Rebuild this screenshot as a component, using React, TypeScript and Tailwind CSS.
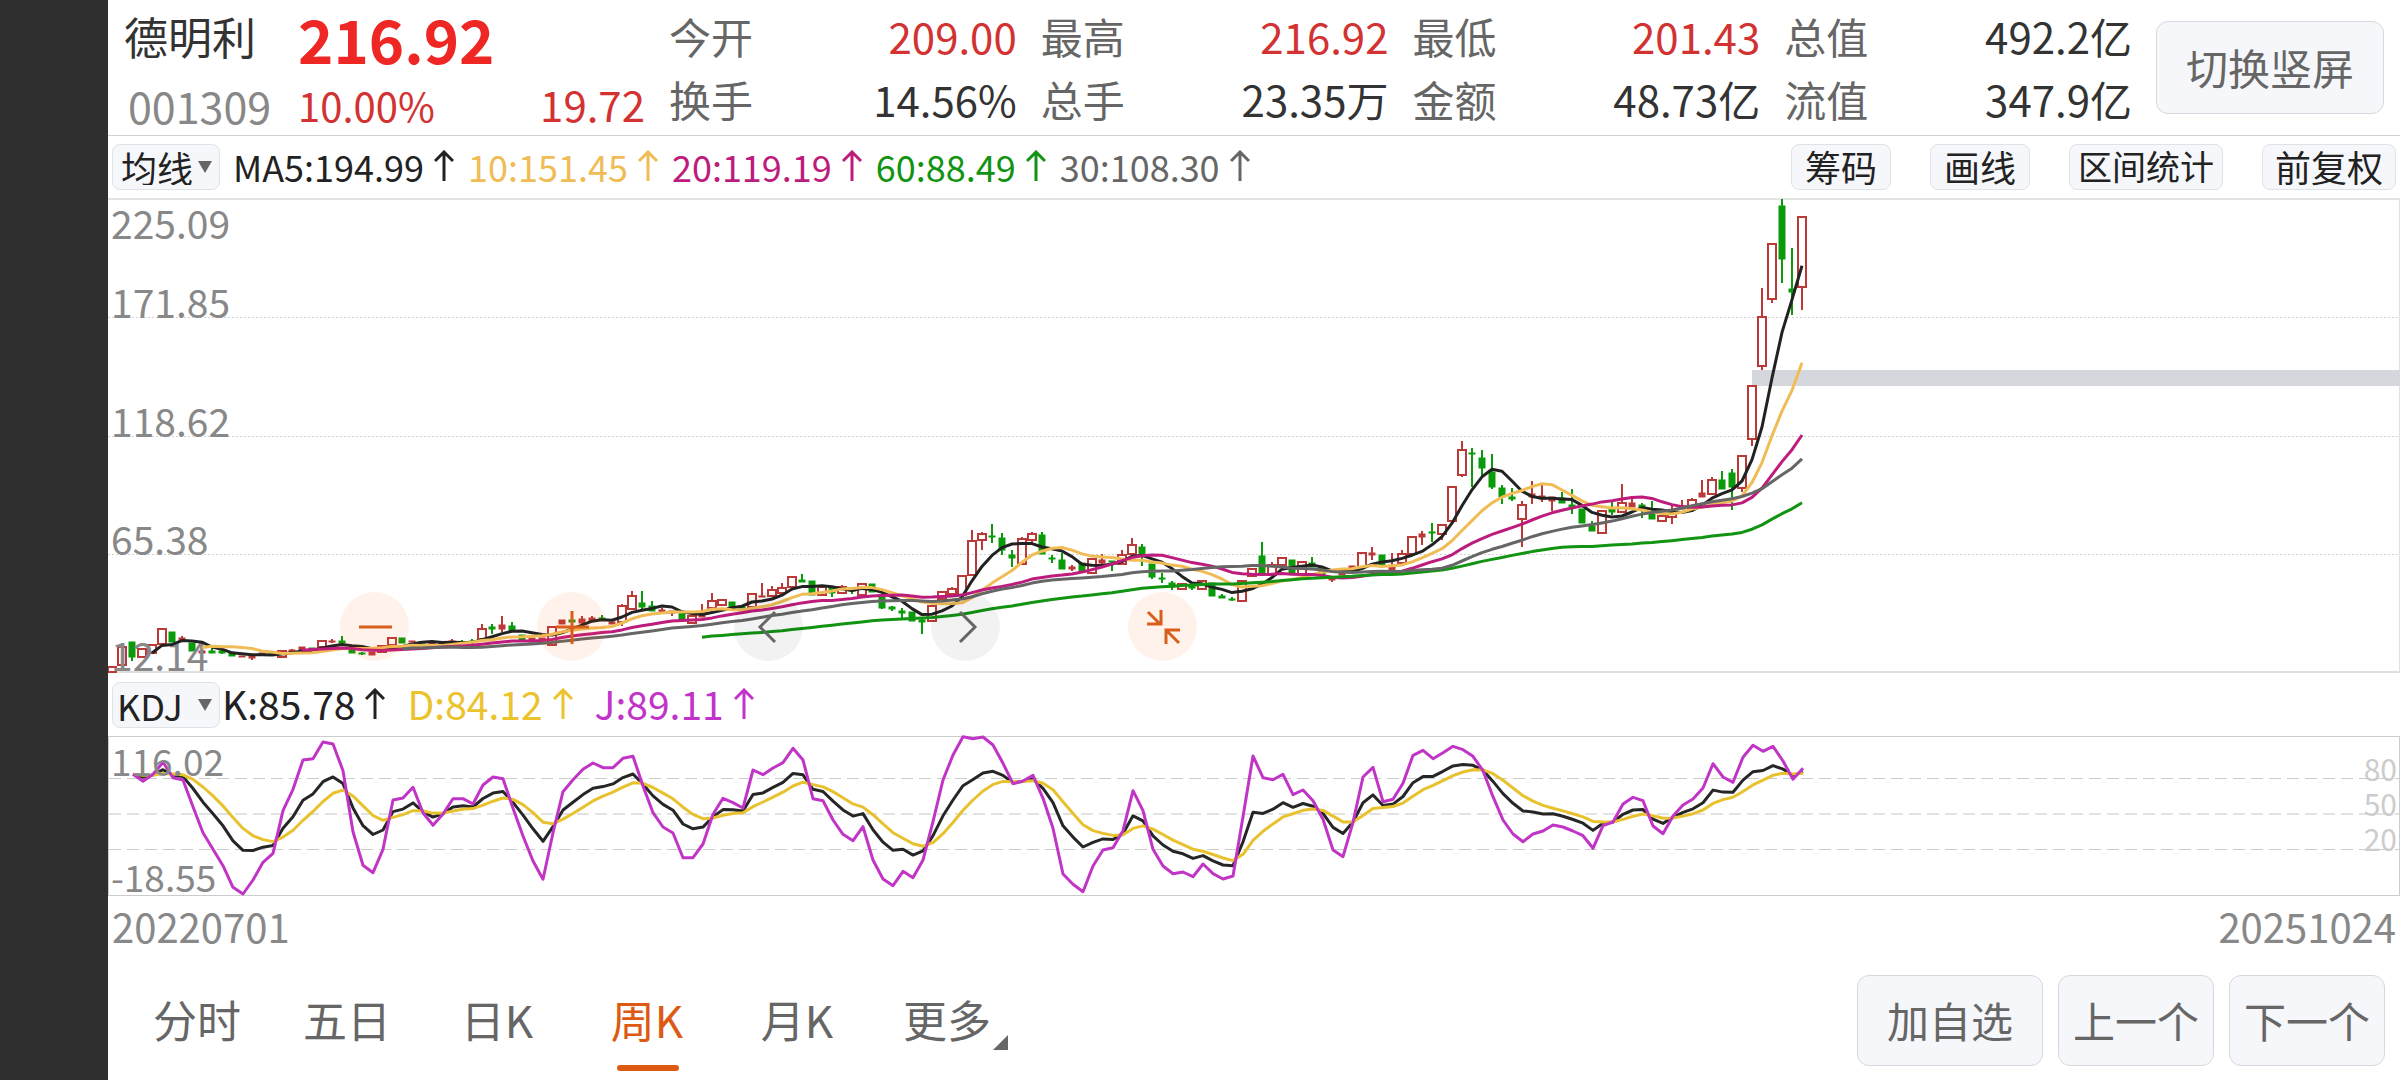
import { useState } from "react";
import type { ReactNode } from "react";
import clsx from "clsx";

type Candle = [dir: "r" | "g", top: number, bottom: number, high?: number, low?: number];

// Weekly candles in plot units: body top, body bottom, then wick ends where there are any
const CANDLES: Candle[] = [
    ["r", 667, 672], ["r", 647, 665], ["g", 642, 657, 642, 661], ["r", 649, 657], ["r", 645, 653],
    ["r", 629, 644], ["g", 632, 642], ["r", 638, 641, 636], ["g", 643, 651], ["r", 651, 653],
    ["g", 651, 653, 648], ["g", 651, 653, 649, 654], ["g", 653, 656], ["r", 656, 657], ["r", 656, 658, 656, 660],
    ["r", 653, 654], ["g", 652, 654], ["r", 651, 657], ["r", 650, 652, 649], ["r", 647, 650],
    ["g", 648, 651], ["r", 641, 647], ["r", 641, 642, 639, 643], ["g", 641, 643, 636], ["g", 650, 653],
    ["g", 653, 654, 652, 655], ["r", 652, 655], ["r", 646, 652], ["r", 638, 645, 637], ["g", 638, 643],
    ["r", 641, 642], ["g", 642, 643], ["r", 643, 644], ["r", 643, 645], ["r", 641, 643, 639],
    ["g", 642, 643, 640], ["g", 641, 642, 639], ["r", 629, 639, 624], ["g", 627, 629, 624, 634], ["r", 625, 629, 616, 632],
    ["g", 626, 631, 622], ["g", 635, 641], ["r", 638, 642], ["r", 638, 641], ["r", 627, 645],
    ["r", 620, 624], ["g", 620, 622], ["r", 619, 623, 616, 625], ["r", 618, 621, 616], ["g", 618, 620, 615],
    ["r", 622, 624], ["r", 606, 622, 604, 626], ["r", 596, 609, 591], ["g", 603, 607, 591, 609], ["g", 606, 611, 601],
    ["r", 610, 613, 608], ["r", 611, 613, 611, 616], ["g", 613, 620], ["r", 616, 623], ["r", 615, 617, 604],
    ["r", 601, 608, 593], ["r", 600, 605], ["g", 602, 607], ["g", 607, 608], ["r", 594, 607],
    ["r", 596, 597, 583], ["r", 590, 596, 586], ["r", 588, 593, 583], ["r", 577, 587], ["g", 580, 582, 574],
    ["g", 581, 595], ["r", 587, 595], ["g", 587, 593, 587, 597], ["r", 587, 593, 585], ["g", 588, 591, 588, 594],
    ["r", 584, 595], ["g", 584, 592], ["g", 595, 608, 595, 609], ["g", 607, 609, 606, 611], ["g", 611, 613, 608, 618],
    ["g", 612, 621], ["g", 620, 622, 619, 634], ["r", 606, 621], ["r", 592, 599], ["r", 589, 594, 587],
    ["r", 576, 595], ["r", 541, 575, 530], ["r", 534, 540, 532, 550], ["g", 536, 537, 524, 543], ["g", 538, 550, 533, 555],
    ["g", 555, 558, 550, 567], ["r", 539, 564, 537], ["r", 534, 540, 532, 543], ["g", 535, 554, 532], ["g", 558, 559, 555, 563],
    ["g", 560, 569, 553], ["r", 567, 569, 565, 571], ["g", 563, 572], ["r", 559, 573], ["r", 560, 563, 554, 565],
    ["g", 561, 562, 561, 571], ["r", 555, 564, 550], ["r", 545, 554, 538], ["g", 547, 555, 544, 566], ["g", 564, 577, 564, 579],
    ["g", 578, 579, 573, 583], ["g", 583, 587, 581, 590], ["r", 584, 589], ["g", 585, 588, 585, 590], ["r", 581, 589],
    ["g", 583, 596], ["g", 596, 598, 594], ["g", 599, 600, 597, 601], ["r", 581, 601], ["r", 569, 576, 569, 577],
    ["g", 556, 573, 542], ["r", 565, 575, 562], ["r", 558, 565, 557], ["g", 560, 573], ["r", 562, 574],
    ["g", 563, 567, 557], ["g", 568, 575], ["r", 577, 580, 577, 582], ["r", 572, 575], ["r", 566, 570],
    ["r", 553, 567], ["r", 553, 555, 547, 560], ["g", 555, 566], ["r", 566, 570, 553], ["r", 554, 563, 550],
    ["r", 537, 554], ["r", 534, 537, 531, 545], ["g", 532, 533, 523, 542], ["r", 525, 534, 525, 540], ["r", 487, 521],
    ["r", 450, 475, 441, 477], ["g", 453, 454, 448, 487], ["g", 458, 468, 450, 477], ["g", 472, 487, 454, 489], ["g", 488, 497, 485, 504],
    ["g", 497, 499, 488, 501], ["r", 505, 519, 501, 547], ["r", 494, 497, 481, 504], ["r", 496, 499, 485, 502], ["r", 497, 501, 497, 511],
    ["g", 498, 503, 492], ["g", 505, 508, 489, 514], ["g", 509, 523], ["g", 526, 531, 521], ["r", 511, 533],
    ["g", 508, 512, 502, 515], ["r", 503, 512, 484], ["r", 503, 507, 499], ["g", 505, 509, 503, 518], ["g", 513, 519, 501],
    ["r", 516, 521], ["r", 512, 517, 505, 524], ["r", 506, 509, 500], ["r", 500, 508, 498], ["r", 493, 497, 480],
    ["r", 480, 494, 477], ["g", 480, 489, 471], ["g", 473, 487, 469, 510], ["r", 456, 488, 456, 492], ["r", 386, 439, 386, 446],
    ["r", 317, 366, 288, 370], ["r", 244, 299, 244, 303], ["g", 206, 259, 199, 283], ["g", 289, 292, 248, 315], ["r", 217, 287, 217, 310],
];

// J line, starting with the third week
const J_START = 2;
const J_LINE = [
    283, 304, 283, 247, 293, 300, 380, 458, 508, 557, 622, 642, 600, 547, 520, 392, 328, 240, 236, 186,
    192, 272, 455, 556, 578, 508, 360, 354, 322, 398, 436, 402, 356, 356, 372, 315, 291, 296, 385, 468,
    543, 598, 458, 335, 299, 268, 249, 263, 263, 235, 229, 318, 398, 441, 459, 533, 533, 492, 403, 355,
    368, 384, 270, 284, 264, 248, 205, 240, 356, 362, 420, 463, 482, 440, 540, 597, 617, 574, 593, 540,
    425, 300, 225, 170, 176, 171, 195, 250, 311, 303, 286, 355, 445, 582, 613, 635, 558, 510, 503, 452,
    332, 392, 508, 558, 581, 576, 590, 552, 581, 597, 588, 410, 228, 293, 299, 283, 344, 330, 362, 418,
    510, 530, 427, 291, 262, 365, 358, 310, 226, 211, 236, 218, 199, 209, 229, 272, 350, 420, 462, 485,
    462, 453, 435, 441, 453, 467, 505, 437, 426, 372, 352, 362, 438, 461, 408, 375, 357, 324, 251, 291,
    307, 232, 196, 214, 199, 243, 298, 265,
];

const PLOT_TOP = 200;
const candleX = (i: number) => 4 + i * 10;
const closeOf = (c: Candle) => (c[0] === "r" ? c[1] : c[2]);

function maPoints(period: number) {
    const points: string[] = [];
    for (let i = period - 1; i < CANDLES.length; i++) {
        let sum = 0;
        for (let k = i - period + 1; k <= i; k++) sum += closeOf(CANDLES[k]);
        points.push(`${candleX(i)},${(sum / period - PLOT_TOP).toFixed(1)}`);
    }
    return points.join(" ");
}

// J = 3K - 2D and D is the smoothed K, so both follow from J
function kdjPoints() {
    let dValue = J_LINE[0];
    const k: string[] = [];
    const d: string[] = [];
    const j: string[] = [];
    J_LINE.forEach((jValue, n) => {
        dValue = (6 * dValue + jValue) / 7;
        const kValue = (jValue + 2 * dValue) / 3;
        const x = candleX(n + J_START);
        const toY = (v: number) => ((v - 171) / 3).toFixed(1);
        k.push(`${x},${toY(kValue)}`);
        d.push(`${x},${toY(dValue)}`);
        j.push(`${x},${toY(jValue)}`);
    });
    return { k: k.join(" "), d: d.join(" "), j: j.join(" ") };
}

const MA_LINES = [
    { period: 5, color: "#222222" },
    { period: 10, color: "#f0bc56" },
    { period: 20, color: "#bd1c7c" },
    { period: 60, color: "#129312" },
    { period: 30, color: "#666666" },
];

const STATS = [
    { label: "今开", value: "209.00", red: true },
    { label: "最高", value: "216.92", red: true },
    { label: "最低", value: "201.43", red: true },
    { label: "总值", value: "492.2亿" },
    { label: "换手", value: "14.56%" },
    { label: "总手", value: "23.35万" },
    { label: "金额", value: "48.73亿" },
    { label: "流值", value: "347.9亿" },
];

const TABS = ["分时", "五日", "日K", "周K", "月K"];

function UpArrow() {
    return (
        <svg className="h-8 w-5 shrink-0" viewBox="0 0 20 32" fill="none" stroke="currentColor" strokeWidth="3">
            <path d="M10 31V2M1 11l9-9 9 9" />
        </svg>
    );
}

function Reading({ className, children }: { className: string; children: ReactNode }) {
    return (
        <span className={clsx("flex items-center gap-[10px] pb-[2px]", className)}>
            {children}
            <UpArrow />
        </span>
    );
}

function IndicatorSelect({ label, options, className }: { label: string; options: string[]; className: string }) {
    return (
        <div className="relative w-[108px] shrink-0">
            <select
                aria-label={label}
                className={clsx(
                    "block h-[46px] w-full appearance-none rounded-lg border border-[#dfe2e6] bg-[#f6f7fa] text-[36px] leading-none text-[#222]",
                    className
                )}
            >
                {options.map((o) => (
                    <option key={o}>{o}</option>
                ))}
            </select>
            <svg className="pointer-events-none absolute top-[17px] right-2 h-3 w-[14px] fill-[#666]" viewBox="0 0 14 12">
                <path d="M0 0h14L7 12z" />
            </svg>
        </div>
    );
}

function RoundButton({ label, gray, children }: { label: string; gray?: boolean; children: ReactNode }) {
    return (
        <button
            aria-label={label}
            className={clsx(
                "flex size-[69px] items-center justify-center rounded-full",
                gray ? "bg-black/5 text-[#666]" : "bg-[#ff5a00]/8 text-[#d85f1b]"
            )}
        >
            <svg className="size-9" viewBox="0 0 36 36" fill="none" stroke="currentColor" strokeWidth="3">
                {children}
            </svg>
        </button>
    );
}

function PriceChart() {
    return (
        <svg className="block h-[471px] w-full overflow-visible" fill="none">
            {[117, 236, 354].map((y) => (
                <line key={y} x1="0" x2="100%" y1={y + 0.5} y2={y + 0.5} stroke="#d2d2d2" strokeDasharray="2 2" />
            ))}
            <svg x="1644" y="170" width="100%" height="16">
                <rect width="100%" height="16" fill="#d4d8dd" />
            </svg>
            {CANDLES.map(([dir, top, bottom, high = top, low = bottom], i) => {
                const x = candleX(i);
                const color = dir === "r" ? "#bb3a38" : "#0a9b0a";
                const hollow = dir === "r" && bottom - top > 4;
                return (
                    <g key={i} stroke={color} strokeWidth="2" transform={`translate(0 ${-PLOT_TOP})`}>
                        {high < top && <line x1={x} x2={x} y1={high} y2={top} />}
                        {low > bottom && <line x1={x} x2={x} y1={bottom} y2={low} />}
                        {hollow ? (
                            <rect x={x - 4} y={top} width="8" height={bottom - top} />
                        ) : (
                            <rect x={x - 3} y={top} width="6" height={bottom - top} fill={color} strokeWidth="1" />
                        )}
                    </g>
                );
            })}
            <g className="fill-[#888] text-[39px]">
                <text x="3" y="39">225.09</text>
                <text x="3" y="118">171.85</text>
                <text x="3" y="237">118.62</text>
                <text x="3" y="355">65.38</text>
                <text x="3" y="471">12.14</text>
            </g>
            {MA_LINES.map(({ period, color }) => (
                <polyline key={period} points={maPoints(period)} stroke={color} strokeWidth="3" strokeLinejoin="round" />
            ))}
        </svg>
    );
}

function KdjChart() {
    const { k, d, j } = kdjPoints();
    return (
        <svg className="block h-[158px] w-full overflow-visible" fill="none">
            <line x1="0" x2="100%" y1="41.5" y2="41.5" stroke="#ccc" strokeDasharray="12 6" />
            <line x1="0" x2="100%" y1="77" y2="77" stroke="#e2e2e2" strokeWidth="2" strokeDasharray="12 6" />
            <line x1="0" x2="100%" y1="112.5" y2="112.5" stroke="#ccc" strokeDasharray="12 6" />
            <g strokeWidth="3" strokeLinejoin="round">
                <polyline points={k} stroke="#262626" />
                <polyline points={d} stroke="#e8c22e" />
                <polyline points={j} stroke="#c035c6" />
            </g>
            <g className="fill-[#888] text-[37px]">
                <text x="2" y="39">116.02</text>
                <text x="2" y="155">-18.55</text>
            </g>
        </svg>
    );
}

export default function App() {
    const [tab, setTab] = useState("周K");

    return (
        <div className="flex min-h-screen bg-white font-['Noto_Sans_CJK_SC',sans-serif] text-[#333]">
            <aside className="w-[108px] shrink-0 bg-[#2f2f2f]" />
            <main className="flex min-w-0 flex-1 flex-col overflow-hidden">
                {/* Quote header */}
                <header className="flex h-[136px] gap-6 border-b border-[#d2d2d2] pr-4 pl-4 text-[42px] leading-none whitespace-nowrap">
                    <div className="flex w-[521px] shrink-0">
                        <div className="flex w-[174px] flex-col pt-[14px]">
                            <h1 className="text-[44px]">德明利</h1>
                            <span className="mt-[26px] pl-1 text-[43px] text-[#888]">001309</span>
                        </div>
                        <div className="flex flex-1 flex-col pt-1">
                            <strong className="text-[60px] leading-[68px] font-bold text-[#ee2624]">216.92</strong>
                            <div className="mt-[11px] flex items-baseline justify-between text-[#d23232]">
                                <span className="text-[40px]">10.00%</span>
                                <span>19.72</span>
                            </div>
                        </div>
                    </div>
                    <dl className="grid flex-1 grid-cols-4 content-start gap-x-6 gap-y-[21px] pt-[15px]">
                        {STATS.map((s) => (
                            <div key={s.label} className="flex justify-between">
                                <dt className="text-[#666]">{s.label}</dt>
                                <dd className={s.red ? "text-[#d23232]" : "text-[#333]"}>{s.value}</dd>
                            </div>
                        ))}
                    </dl>
                    <button className="mt-[21px] h-[93px] w-[228px] shrink-0 rounded-xl border border-[#d5d9dd] bg-[#f6f7fa] pb-[2px] text-[#666]">
                        切换竖屏
                    </button>
                </header>

                {/* Moving averages */}
                <div className="flex h-16 items-center gap-[13px] border-b-2 border-[#e4e4e4] pr-1 pl-1 text-[36px] leading-none whitespace-nowrap">
                    <IndicatorSelect label="主图指标" options={["均线"]} className="pl-2" />
                    <div className="flex flex-1 gap-[14px]">
                        <Reading className="text-[#222]">MA5:194.99</Reading>
                        <Reading className="text-[#f0bc56]">10:151.45</Reading>
                        <Reading className="text-[#bd1c7c]">20:119.19</Reading>
                        <Reading className="text-[#129312]">60:88.49</Reading>
                        <Reading className="text-[#666]">30:108.30</Reading>
                    </div>
                    <div className="flex gap-[39px] text-[#222]">
                        {["筹码", "画线", "区间统计", "前复权"].map((t) => (
                            <button
                                key={t}
                                className={clsx(
                                    "h-[46px] rounded-lg border border-[#dfe2e6] bg-[#f6f7fa] pb-[2px]",
                                    t.length > 3 ? "px-2 text-[34px]" : t.length > 2 ? "px-3" : "w-[100px]"
                                )}
                            >
                                {t}
                            </button>
                        ))}
                    </div>
                </div>

                <section className="relative border-r border-b-2 border-[#e0e0e0]">
                    <PriceChart />
                    <div className="absolute bottom-[10px] left-[232px] flex gap-32">
                        <RoundButton label="缩小">
                            <path d="M2 18h33" />
                        </RoundButton>
                        <RoundButton label="放大">
                            <path d="M2 18h33M18 2v33" />
                        </RoundButton>
                        <RoundButton label="左移" gray>
                            <path d="M24 3L9 18l15 15" />
                        </RoundButton>
                        <RoundButton label="右移" gray>
                            <path d="M12 3l15 15-15 15" />
                        </RoundButton>
                        <RoundButton label="收起">
                            <path d="M2 15h14V1M3 3l12 12M35 21H21v14M22 22l12 12" />
                        </RoundButton>
                    </div>
                </section>

                {/* KDJ */}
                <div className="flex h-[63px] items-center gap-[2px] pl-1 text-[39px] leading-none whitespace-nowrap">
                    <IndicatorSelect label="副图指标" options={["KDJ"]} className="pl-1" />
                    <div className="flex gap-[22px]">
                        <Reading className="text-[#222]">K:85.78</Reading>
                        <Reading className="text-[#ebc32c]">D:84.12</Reading>
                        <Reading className="text-[#c233ca]">J:89.11</Reading>
                    </div>
                </div>
                <section className="relative border border-[#ccc]">
                    <KdjChart />
                    <div className="absolute top-[14px] right-[2px] flex flex-col text-right text-[30px] leading-[35px] text-[#ccc]">
                        <span>80</span>
                        <span>50</span>
                        <span>20</span>
                    </div>
                </section>

                <div className="flex justify-between px-1 pt-2 text-[40px] leading-[44px] text-[#888]">
                    <time>20220701</time>
                    <time>20251024</time>
                </div>

                {/* Period tabs */}
                <footer className="flex items-start justify-between pt-[27px] pr-[15px] pl-[14px] whitespace-nowrap">
                    <nav className="flex text-[44px] leading-none">
                        {TABS.map((t) => (
                            <button
                                key={t}
                                onClick={() => setTab(t)}
                                className={clsx(
                                    "relative h-[96px] w-[150px] pb-2",
                                    tab === t ? "text-[#dc5a12]" : "text-[#666]"
                                )}
                            >
                                {t}
                                {tab === t && (
                                    <span className="absolute bottom-0 left-[45px] h-[6px] w-[62px] rounded-full bg-[#dc5a12]" />
                                )}
                            </button>
                        ))}
                        <button className="relative h-[96px] w-[150px] pb-2 text-[#666]">
                            更多
                            <svg className="absolute right-[14px] bottom-[21px] h-[15px] w-[15px] fill-[#666]" viewBox="0 0 15 15">
                                <path d="M15 0v15H0z" />
                            </svg>
                        </button>
                    </nav>
                    <div className="flex gap-[15px] text-[42px] leading-none text-[#666]">
                        <button className="h-[91px] w-[186px] rounded-xl border border-[#d5d9dd] bg-[#f6f7fa] pb-[2px]">加自选</button>
                        <button className="h-[91px] w-[156px] rounded-xl border border-[#d5d9dd] bg-[#f6f7fa] pb-[2px]">上一个</button>
                        <button className="h-[91px] w-[156px] rounded-xl border border-[#d5d9dd] bg-[#f6f7fa] pb-[2px]">下一个</button>
                    </div>
                </footer>
            </main>
        </div>
    );
}
